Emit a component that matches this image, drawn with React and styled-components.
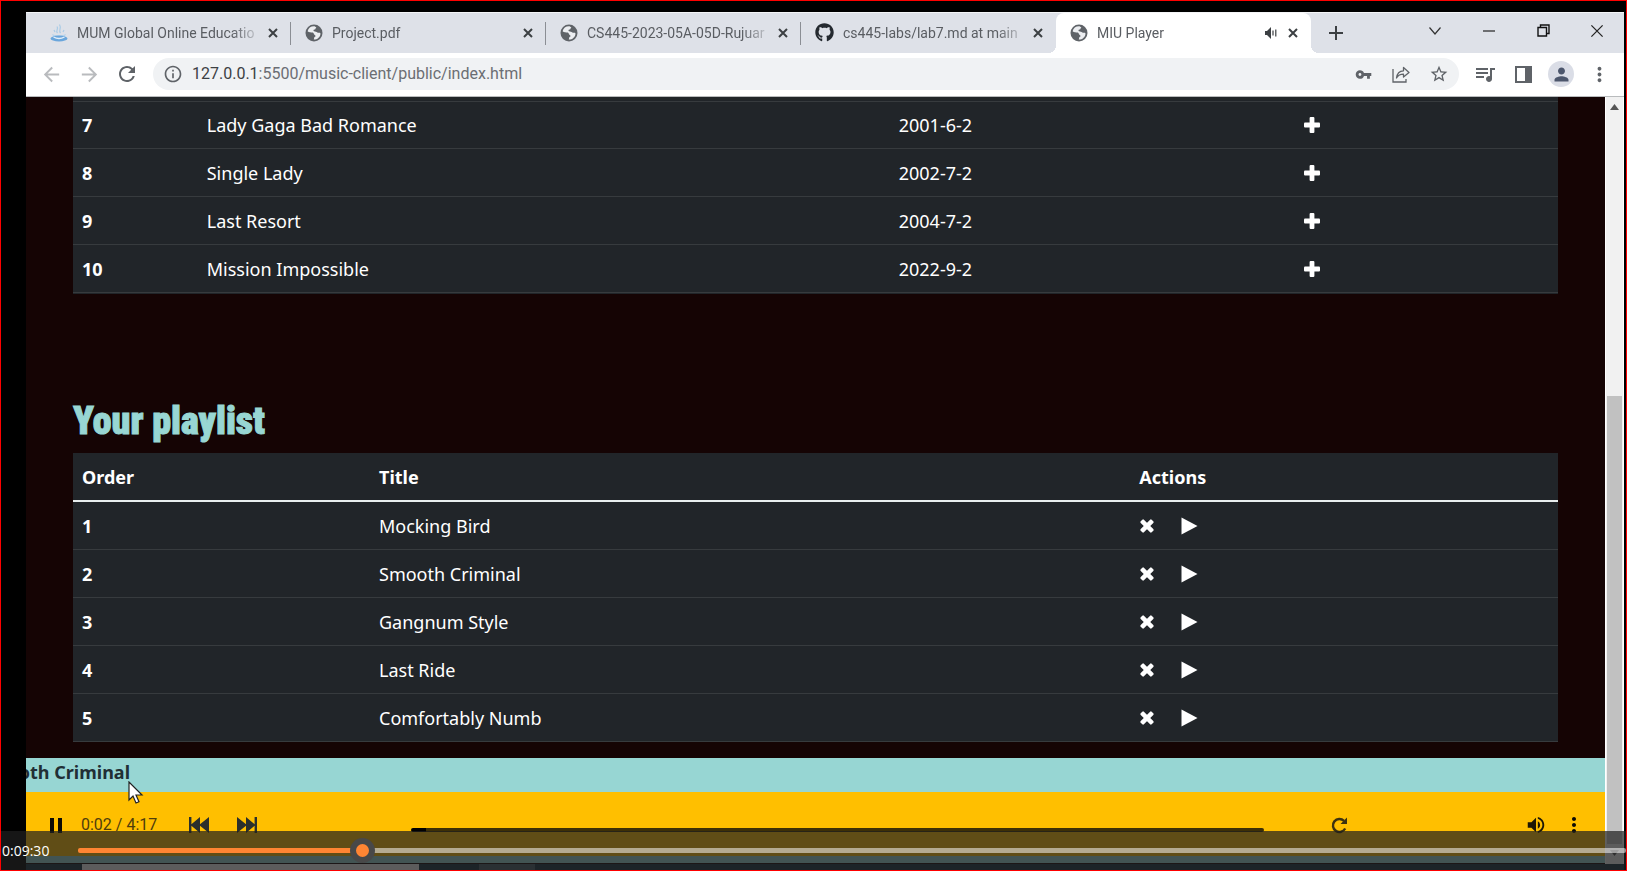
import React, { useState } from "react";
import styled, { createGlobalStyle, css } from "styled-components";
import {
  MdArrowBack,
  MdArrowForward,
  MdRefresh,
  MdInfoOutline,
  MdVpnKey,
  MdStarBorder,
  MdQueueMusic,
  MdPerson,
  MdMoreVert,
  MdVolumeUp,
} from "react-icons/md";
import { FaGithub } from "react-icons/fa";

const GlobalStyle = createGlobalStyle`
  * { box-sizing: border-box; }
  body {
    margin: 0;
    background: #000;
    font-family: "Noto Sans", "Open Sans", sans-serif;
  }
  button, input { font: inherit; }
`;

const Frame = styled.div`
  position: relative;
  display: flex;
  flex-direction: column;
  min-height: 100vh;
  padding: 11px 2px 0 25px;
  border: 1px solid #f00;
  background: #000;
  overflow: hidden;
`;

/* Browser chrome */

const TabStrip = styled.div`
  display: flex;
  height: 41px;
  padding-left: 10px;
  background: #dee1e8;
  border-top: 1px solid #f4f5f7;
`;

const Tab = styled.div`
  position: relative;
  display: flex;
  align-items: center;
  gap: 9px;
  flex: 0 1 255px;
  min-width: 0;
  padding: 0 11px 1px 14px;
  font: 14px/20px Roboto, sans-serif;
  color: #5a5d62;
  ${(p) =>
    p.$divider &&
    css`
      &::after {
        content: "";
        position: absolute;
        right: 0;
        top: 9px;
        width: 1px;
        height: 23px;
        background: #8b8e94;
      }
    `}
  ${(p) =>
    p.$active &&
    css`
      background: #fff;
      border-radius: 8px 8px 0 0;
      &::before,
      &::after {
        content: "";
        position: absolute;
        bottom: 0;
        width: 8px;
        height: 8px;
      }
      &::before {
        right: 100%;
        background: radial-gradient(circle at 0 0, transparent 8px, #fff 8px);
      }
      &::after {
        left: 100%;
        background: radial-gradient(circle at 100% 0, transparent 8px, #fff 8px);
      }
    `}
`;

const TabTitle = styled.span`
  flex: 1;
  min-width: 0;
  overflow: hidden;
  white-space: nowrap;
  mask-image: linear-gradient(to right, #000 86%, rgba(0, 0, 0, 0.2));
`;

const IconButton = styled.button`
  display: flex;
  align-items: center;
  justify-content: center;
  flex: none;
  width: ${(p) => p.$w || 38}px;
  height: ${(p) => p.$h || 32}px;
  padding: 0;
  border: 0;
  background: none;
  color: ${(p) => p.$color || "#5f6368"};
  cursor: pointer;
`;

const WindowButtons = styled.div`
  display: flex;
  align-items: center;
  margin-left: auto;
  padding-bottom: 5px;
`;

const Toolbar = styled.div`
  display: flex;
  align-items: center;
  height: 44px;
  padding: 0 6px 1px;
  background: #fff;
  border-bottom: 1px solid #b9bbbd;
`;

const AddressBar = styled.div`
  display: flex;
  align-items: center;
  flex: 1;
  height: 32px;
  margin: 0 7px;
  padding: 0 1px 0 10px;
  border-radius: 16px;
  background: #f0f2f4;
  color: #5f6368;
`;

const Url = styled.span`
  flex: 1;
  margin-left: 9px;
  font: 16px/24px Roboto, sans-serif;
  color: #6b6e73;
  white-space: nowrap;
  b {
    font-weight: 400;
    color: #3c4043;
  }
`;

const Avatar = styled.span`
  display: flex;
  align-items: center;
  justify-content: center;
  width: 26px;
  height: 26px;
  border-radius: 50%;
  background: #dadde6;
  color: #4c566c;
`;

/* Page */

const Viewport = styled.div`
  display: flex;
  flex: 1;
`;

const Page = styled.main`
  display: flex;
  flex-direction: column;
  flex: 1;
  min-width: 0;
  background: #150404;
`;

const Content = styled.section`
  padding: 0 47px 16px;
`;

const TableClip = styled.div`
  padding-top: 4px;
  background: #212529;
  border-bottom: 1px solid #212529;
`;

const Table = styled.table`
  width: 100%;
  table-layout: fixed;
  border-collapse: separate;
  border-spacing: 0;
  background: #212529;
  color: #fff;
  font-size: 18px;
  line-height: 28px;
  text-align: left;
`;

const TopRule = styled.tbody`
  td,
  th {
    border-bottom: 1px solid #373b3e;
  }
  tr:first-child > * {
    border-top: 1px solid #373b3e;
  }
`;

const Col = styled.col`
  width: ${(p) => p.$w};
`;

const cell = css`
  height: 48px;
  padding: 0 9px;
  vertical-align: middle;
`;

const Cell = styled.td`
  ${cell}
  border-bottom: 1px solid #373b3e;
`;

const RowHead = styled.th`
  ${cell}
  border-bottom: 1px solid #373b3e;
`;

const ColHead = styled.th`
  ${cell}
  height: 49px;
  border-bottom: 2px solid #e8eeee;
`;

const Heading = styled.h2`
  margin: 103px 0 8px;
  font: 900 38px/48px "Roboto Condensed", Impact, sans-serif;
  color: #98d6d3;
  -webkit-text-stroke: 1px #98d6d3;
`;

const Actions = styled.div`
  display: flex;
  gap: 25px;
`;

const ScrollTrack = styled.div`
  display: flex;
  flex-direction: column;
  align-items: center;
  width: 19px;
  padding: 7px 0 2px;
  background: #f1f1f1;
  border-left: 1px solid #fff;
  border-right: 1px solid #fff;
`;

const ScrollSpace = styled.div`
  flex: 286;
`;

const ScrollThumb = styled.div`
  flex: 448;
  width: 15px;
  background: #c1c1c1;
`;

/* Player */

const NowPlaying = styled.div`
  position: relative;
  display: flex;
  width: 100%;
  height: 34px;
  background: #97d6d3;
`;

const Marquee = styled.div`
  display: flex;
  justify-content: flex-end;
  width: 104px;
  overflow: hidden;
  font-size: 18px;
  font-weight: 700;
  line-height: 28px;
  color: #212f35;
  white-space: nowrap;
`;

const Pointer = styled.svg`
  position: absolute;
  left: 102px;
  top: 23px;
  z-index: 1;
`;

const Controls = styled.div`
  display: flex;
  align-items: center;
  height: 64px;
  padding: 2px 19px 0 17px;
  background: #ffbf00;
  color: #1d1a10;
`;

const Elapsed = styled.span`
  width: 94px;
  margin-left: 12px;
  font: 16px/24px Roboto, sans-serif;
  color: #4f3d0c;
  white-space: nowrap;
`;

const Seek = styled.input`
  flex: 853;
  min-width: 0;
  height: 4px;
  margin: 10px 0 0 140px;
  appearance: none;
  border-radius: 2px;
  background: linear-gradient(to right, #000 15px, #3d2f06 15px);
  &::-webkit-slider-thumb {
    appearance: none;
    width: 4px;
    height: 4px;
    background: transparent;
  }
`;

const Spacer = styled.div`
  flex: ${(p) => p.$grow};
`;

const PageFoot = styled.div`
  height: 7px;
  background: #97d6d3;
`;

const Taskbar = styled.div`
  display: flex;
  height: 6px;
  padding-left: 56px;
  background: #15303e;
`;

const SearchBox = styled.div`
  width: 337px;
  background: #f2f2f2;
`;

const TaskItem = styled.div`
  width: 56px;
  margin-left: 60px;
  background: #465a64;
`;

/* Recording time bar, drawn over the screen */

const TimeBar = styled.div`
  position: absolute;
  left: 0;
  right: 0;
  bottom: 0;
  z-index: 2;
  display: flex;
  align-items: center;
  height: 39px;
  padding-left: 1px;
  background: rgba(31, 31, 31, 0.71);
`;

const TimeLabel = styled.label`
  width: 76px;
  font: 14px/20px "Open Sans", sans-serif;
  color: #fff;
`;

const TimeRange = styled.input`
  flex: 1;
  min-width: 0;
  height: 5px;
  margin: 0;
  appearance: none;
  border-radius: 2px;
  &::-webkit-slider-thumb {
    appearance: none;
    width: 25px;
    height: 25px;
    border: 6px solid #484848;
    border-radius: 50%;
    background: #ff8533;
  }
`;

const CloseIcon = ({ size = 10, width = 2 }) => (
  <svg width={size} height={size} viewBox="0 0 10 10" aria-hidden="true">
    <path d="M1 1L9 9M9 1L1 9" stroke="currentColor" strokeWidth={width} />
  </svg>
);

const GlobeIcon = () => (
  <svg width="18" height="18" viewBox="0 0 18 18" aria-hidden="true">
    <circle cx="9" cy="9" r="8.5" fill="#5f6368" />
    <path
      d="M9.500 2.200C6 2 3.200 4 2.600 7.200C4 8.600 6 8.200 7.800 8.600C9 9 8.600 10.800 10 11.200C11 11.600 10.600 12.600 9.400 13L8.800 15.600C12.500 15.600 15.400 12.800 15.500 9.400C14.600 8.200 13.600 9.200 12.400 8.600C11.400 7.600 10.400 7.800 9 7.200C8 6.600 8.400 5.600 9.600 5.600C11 5.400 10.200 4 11.400 3.600z"
      fill="#eceef1"
    />
    <path d="M2.400 9.400C2.600 12 4 14.200 6.400 15.200C7 13.600 6.200 12.400 5.200 11.800C4 11.200 3.600 10 2.400 9.400z" fill="#5f6368" />
  </svg>
);

const CupIcon = () => (
  <svg width="18" height="18" viewBox="0 0 18 18" fill="none" aria-hidden="true">
    <path d="M7.500 9C5 6.500 9 5.500 7 2.500M10.500 9C8 6.500 12 4.500 9.500 .5M5 8L4 6M13 8l1-2" stroke="#a9cbe6" strokeWidth="1.200" />
    <path d="M2 10q7 3 14 0l-2 4H4z" fill="#b5d3ec" />
    <ellipse cx="9" cy="14.500" rx="8.500" ry="3" fill="#6aa6dc" />
    <path d="M3.500 13q5.500 3 11 0" stroke="#e2eef8" strokeWidth="1.300" />
  </svg>
);

const PlusIcon = () => (
  <svg width="16" height="16" viewBox="0 0 16 16" fill="#fff" aria-hidden="true">
    <rect x="5.6" width="4.8" height="16" rx="1" />
    <rect y="5.6" width="16" height="4.8" rx="1" />
  </svg>
);

const RemoveIcon = () => (
  <svg width="14" height="14" viewBox="0 0 15 15" fill="#fff" aria-hidden="true">
    <g transform="rotate(45 7.5 7.5)">
      <rect x="5.1" y="-0.8" width="4.8" height="16.6" rx="1.2" />
      <rect x="-0.8" y="5.1" width="16.6" height="4.8" rx="1.2" />
    </g>
  </svg>
);

const PlayIcon = () => (
  <svg width="17" height="18" viewBox="0 0 17 18" fill="#fff" aria-hidden="true">
    <path d="M.5 .5L16.500 9L.5 17.500z" />
  </svg>
);

const SkipIcon = ({ forward }) => (
  <svg width="20" height="16" viewBox="0 0 20 16" fill="currentColor" aria-hidden="true">
    <g transform={forward ? "translate(20 0) scale(-1 1)" : undefined}>
      <path d="M0 0h2.4v7.2L11 0v7.2L20 0v16L11 8.8V16L2.4 8.8V16H0z" />
    </g>
  </svg>
);

const RepeatIcon = () => (
  <svg width="17" height="17" viewBox="0 0 17 17" fill="none" aria-hidden="true">
    <path d="M14.200 11.500A6.500 6.500 0 1 1 13 3.800" stroke="currentColor" strokeWidth="2.400" />
    <path d="M16 .5V7H9.500z" fill="currentColor" />
  </svg>
);

const SpeakerIcon = () => (
  <svg width="12" height="12" viewBox="0 0 12 12" aria-hidden="true">
    <path d="M0 4h2l4-4v12L2 8H0z" fill="#3c4043" />
    <path d="M8 3.5v5M10.8 2.5v7" stroke="#3c4043" strokeWidth="1.2" />
  </svg>
);

const ShareIcon = () => (
  <svg width="18" height="18" viewBox="0 0 18 18" fill="none" stroke="currentColor" strokeWidth="1.3" aria-hidden="true">
    <path d="M1 4v13h13v-3" />
    <path d="M4.500 13C5 8.500 7.500 6 11.500 5.800V2.500L17 7.500L11.500 12V9.200C8 9.200 6 10.500 4.500 13z" strokeLinejoin="round" />
  </svg>
);

const PanelIcon = () => (
  <svg width="17" height="17" viewBox="0 0 17 17" aria-hidden="true">
    <path d="M1 1h15v15H1z" fill="none" stroke="currentColor" strokeWidth="2" />
    <path d="M10 1h6v15h-6z" fill="currentColor" />
  </svg>
);

const tabs = [
  { title: "MUM Global Online Educatio", icon: <CupIcon />, divider: true },
  { title: "Project.pdf", icon: <GlobeIcon />, divider: true },
  { title: "CS445-2023-05A-05D-Rujuar", icon: <GlobeIcon />, divider: true },
  { title: "cs445-labs/lab7.md at main ·", icon: <FaGithub size={19} color="#24292f" /> },
  { title: "MIU Player", icon: <GlobeIcon />, active: true, sound: true },
];

const songs = [
  { id: 7, title: "Lady Gaga Bad Romance", date: "2001-6-2" },
  { id: 8, title: "Single Lady", date: "2002-7-2" },
  { id: 9, title: "Last Resort", date: "2004-7-2" },
  { id: 10, title: "Mission Impossible", date: "2022-9-2" },
];

const playlist = ["Mocking Bird", "Smooth Criminal", "Gangnum Style", "Last Ride", "Comfortably Numb"];

const DURATION = 3191;

const clock = (s) =>
  `${Math.floor(s / 3600)}:${String(Math.floor(s / 60) % 60).padStart(2, "0")}:${String(s % 60).padStart(2, "0")}`;

export default function App() {
  const [time, setTime] = useState(570);
  const played = (time / DURATION) * 100;

  return (
    <Frame>
      <GlobalStyle />
      <TabStrip>
        {tabs.map((t) => (
          <Tab key={t.title} $active={t.active} $divider={t.divider}>
            {t.icon}
            <TabTitle>{t.title}</TabTitle>
            {t.sound && <SpeakerIcon />}
            <IconButton $w={14} $h={20} $color="#3c4043" aria-label="Close tab">
              <CloseIcon />
            </IconButton>
          </Tab>
        ))}
        <IconButton $w={50} $h={40} $color="#3c4043" aria-label="New tab">
          <svg width="14" height="14" viewBox="0 0 14 14" aria-hidden="true">
            <path d="M7 0v14M0 7h14" stroke="currentColor" strokeWidth="2" />
          </svg>
        </IconButton>
        <WindowButtons>
          <IconButton $w={54} $color="#333" aria-label="Search tabs">
            <svg width="12" height="8" viewBox="0 0 12 8" fill="none" aria-hidden="true">
              <path d="M.5 .5L6 7L11.500 .5" stroke="currentColor" strokeWidth="1.200" />
            </svg>
          </IconButton>
          <IconButton $w={54} $color="#222" aria-label="Minimize">
            <svg width="12" height="2" viewBox="0 0 12 2" aria-hidden="true">
              <path d="M0 1h12" stroke="currentColor" strokeWidth="1.200" />
            </svg>
          </IconButton>
          <IconButton $w={54} $color="#111" aria-label="Restore">
            <svg width="13" height="13" viewBox="0 0 13 13" fill="none" stroke="currentColor" strokeWidth="1.400" aria-hidden="true">
              <path d="M1 3.500h8.500v8.500H1zM3.500 3.500V1H12v8.500H9.500" />
            </svg>
          </IconButton>
          <IconButton $w={54} $color="#222" aria-label="Close window">
            <CloseIcon size={14} width={0.9} />
          </IconButton>
        </WindowButtons>
      </TabStrip>

      <Toolbar>
        <IconButton $color="#b9bbbe" aria-label="Back">
          <MdArrowBack size={23} />
        </IconButton>
        <IconButton $color="#b9bbbe" aria-label="Forward">
          <MdArrowForward size={23} />
        </IconButton>
        <IconButton aria-label="Reload">
          <MdRefresh size={24} />
        </IconButton>
        <AddressBar>
          <MdInfoOutline size={20} />
          <Url>
            <b>127.0.0.1</b>:5500/music-client/public/index.html
          </Url>
          <IconButton aria-label="Passwords">
            <MdVpnKey size={17} />
          </IconButton>
          <IconButton aria-label="Share">
            <ShareIcon />
          </IconButton>
          <IconButton aria-label="Bookmark">
            <MdStarBorder size={20} />
          </IconButton>
        </AddressBar>
        <IconButton aria-label="Media controls">
          <MdQueueMusic size={24} />
        </IconButton>
        <IconButton aria-label="Side panel">
          <PanelIcon />
        </IconButton>
        <IconButton aria-label="Profile">
          <Avatar>
            <MdPerson size={21} />
          </Avatar>
        </IconButton>
        <IconButton aria-label="Menu">
          <MdMoreVert size={23} />
        </IconButton>
      </Toolbar>

      <Viewport>
        <Page>
          <Content>
            <TableClip>
              <Table>
                <colgroup>
                  <Col $w="8.4%" />
                  <Col $w="46.6%" />
                  <Col $w="27.3%" />
                  <Col />
                </colgroup>
                <TopRule>
                  {songs.map((s) => (
                    <tr key={s.id}>
                      <RowHead scope="row">{s.id}</RowHead>
                      <Cell>{s.title}</Cell>
                      <Cell>{s.date}</Cell>
                      <Cell>
                        <IconButton $w={16} $h={16} aria-label={`Add ${s.title}`}>
                          <PlusIcon />
                        </IconButton>
                      </Cell>
                    </tr>
                  ))}
                </TopRule>
              </Table>
            </TableClip>
            <Heading>Your playlist</Heading>
            <Table>
              <colgroup>
                <Col $w="20%" />
                <Col $w="51.2%" />
                <Col />
              </colgroup>
              <thead>
                <tr>
                  <ColHead scope="col">Order</ColHead>
                  <ColHead scope="col">Title</ColHead>
                  <ColHead scope="col">Actions</ColHead>
                </tr>
              </thead>
              <tbody>
                {playlist.map((title, i) => (
                  <tr key={title}>
                    <RowHead scope="row">{i + 1}</RowHead>
                    <Cell>{title}</Cell>
                    <Cell>
                      <Actions>
                        <IconButton $w={16} $h={18} aria-label={`Remove ${title}`}>
                          <RemoveIcon />
                        </IconButton>
                        <IconButton $w={18} $h={18} aria-label={`Play ${title}`}>
                          <PlayIcon />
                        </IconButton>
                      </Actions>
                    </Cell>
                  </tr>
                ))}
              </tbody>
            </Table>
          </Content>
          <NowPlaying>
            <Marquee>Smooth Criminal</Marquee>
            <Pointer width="16" height="24" viewBox="0 0 16 24" aria-hidden="true">
              <path d="M1 1v18l4-4l3 7l3-1.300l-3-6.700h6z" fill="#fff" stroke="#222" strokeWidth="1.200" />
            </Pointer>
          </NowPlaying>
          <Controls>
            <IconButton $w={26} $color="#0d0b05" aria-label="Pause">
              <svg width="12" height="15" viewBox="0 0 12 15" fill="currentColor" aria-hidden="true">
                <path d="M0 0h4v15H0zM8 0h4v15H8z" />
              </svg>
            </IconButton>
            <Elapsed>0:02 / 4:17</Elapsed>
            <IconButton $w={48} $color="#2b2f2c" aria-label="Previous">
              <SkipIcon />
            </IconButton>
            <IconButton $w={48} $color="#2b2f2c" aria-label="Next">
              <SkipIcon forward />
            </IconButton>
            <Seek type="range" min="0" max="257" defaultValue="2" aria-label="Seek" />
            <Spacer $grow={63} />
            <IconButton $w={24} $color="#3d3210" aria-label="Repeat">
              <RepeatIcon />
            </IconButton>
            <Spacer $grow={173} />
            <IconButton $w={24} $color="#1d1705" aria-label="Volume">
              <MdVolumeUp size={22} />
            </IconButton>
            <Spacer $grow={14} />
            <IconButton $w={24} $color="#0d0b05" aria-label="More options">
              <MdMoreVert size={24} />
            </IconButton>
          </Controls>
          <PageFoot />
        </Page>
        <ScrollTrack>
          <svg width="9" height="6" viewBox="0 0 9 6" aria-hidden="true">
            <path d="M0 6L4.500 0L9 6z" fill="#555" />
          </svg>
          <ScrollSpace />
          <ScrollThumb />
          <svg width="9" height="18" viewBox="0 0 9 18" aria-hidden="true">
            <path d="M0 6L4.500 12L9 6z" fill="#555" />
          </svg>
        </ScrollTrack>
      </Viewport>
      <Taskbar>
        <SearchBox />
        <TaskItem />
      </Taskbar>

      <TimeBar>
        <TimeLabel htmlFor="time">{clock(time)}</TimeLabel>
        <TimeRange
          id="time"
          type="range"
          min="0"
          max={DURATION}
          value={time}
          onChange={(e) => setTime(Number(e.target.value))}
          style={{
            background: `linear-gradient(to right, #ff8533 ${played}%, rgba(255, 255, 255, 0.53) ${played}%)`,
          }}
        />
      </TimeBar>
    </Frame>
  );
}
